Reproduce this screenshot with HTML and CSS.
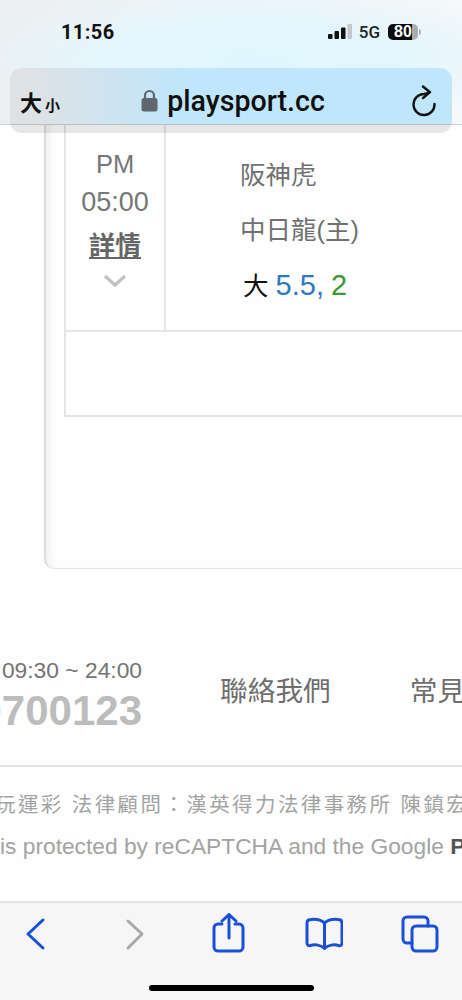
FILE: index.html
```html
<!DOCTYPE html>
<html lang="zh-Hant">
<head>
  <meta charset="UTF-8">
  <meta name="viewport" content="width=device-width, initial-scale=1.0">
  <title>playsport.cc</title>
  <link rel="stylesheet" href="styles.css">
</head>
<body>
  <div class="screen">
    <header class="top-chrome">
      <div class="status-bar">
        <span class="clock">11:56</span>
        <div class="status-icons">
          <svg class="signal" width="24" height="16" viewBox="0 0 24 16">
            <rect x="0" y="10" width="4.500" height="5" rx="1" fill="#111"/>
            <rect x="6.500" y="7" width="4.500" height="8" rx="1" fill="#111"/>
            <rect x="13" y="3.500" width="4.500" height="11.500" rx="1" fill="#111"/>
            <rect x="19.500" y="0" width="4.500" height="15" rx="1" fill="#c4c8ca"/>
          </svg>
          <span class="net">5G</span>
          <div class="battery"><span>80</span></div>
          <i class="battery-cap"></i>
        </div>
      </div>
    </header>

    <div class="url-bar">
      <div class="text-size">大<small>小</small></div>
      <div class="address">
        <svg width="17" height="23" viewBox="0 0 17 23">
          <path d="M4 10V6.500a4.500 4.500 0 0 1 9 0V10" fill="none" stroke="#5f6670" stroke-width="2.200"/>
          <rect x="0.500" y="9" width="16" height="13.500" rx="2.500" fill="#5f6670"/>
        </svg>
        <span>playsport.cc</span>
      </div>
      <svg class="reload" width="26" height="32" viewBox="0 0 26 32">
        <path d="M18 7.500Q16 8.600 13 9A10.500 10.500 0 1 0 23.500 19" fill="none" stroke="#111" stroke-width="2.400" stroke-linecap="round"/>
        <path d="M12 1.500L19 7.200L12 13" fill="none" stroke="#111" stroke-width="2.400" stroke-linecap="round" stroke-linejoin="round"/>
      </svg>
    </div>

    <main class="page">
      <section class="card">
        <div class="match-table">
          <div class="match-row">
            <div class="time-cell">
              <div>PM</div>
              <div class="kickoff">05:00</div>
              <a class="detail-link">詳情</a>
              <svg class="chevron" width="24" height="14" viewBox="0 0 24 14">
                <path d="M2 2L12 11L22 2" fill="none" stroke="#c2c2c2" stroke-width="3.200"/>
              </svg>
            </div>
            <div class="teams-cell">
              <div>阪神虎</div>
              <div>中日龍(主)</div>
              <div class="odds"><span class="odds-side">大</span> <span class="odds-line">5.5,</span> <span class="odds-val">2</span></div>
            </div>
          </div>
          <div class="empty-row"></div>
        </div>
      </section>

      <footer class="site-footer">
        <div class="footer-links">
          <div class="service">
            <div class="hours">09:30 ~ 24:00</div>
            <div class="phone">0700123</div>
          </div>
          <a class="footer-link">聯絡我們</a>
          <a class="footer-link">常見問題</a>
        </div>
        <div class="legal">
          <p class="legal-cn">玩運彩 法律顧問：漢英得力法律事務所 陳鎮宏律師</p>
          <p class="legal-en">is protected by reCAPTCHA and the Google <b>Privacy Policy</b></p>
        </div>
      </footer>
    </main>

    <nav class="toolbar">
      <div class="tool-icons">
        <svg viewBox="0 0 40 44"><path class="ic" d="M28 7L13 21L28 35"/></svg>
        <svg viewBox="0 0 40 44"><path class="ic off" d="M17 8L31 21L17 35"/></svg>
        <svg viewBox="0 0 40 44"><path class="ic" d="M15 11H11a4 4 0 0 0-4 4V34a4 4 0 0 0 4 4H32a4 4 0 0 0 4-4V15a4 4 0 0 0-4-4H28M22 25V2M15 8L22 1.500L29 8"/></svg>
        <svg viewBox="0 0 40 44"><path class="ic" d="M21.500 10C18 7 13 6 8 6.500C5.500 6.500 4 8 4 10V30C4 32 5.500 33 7.500 32.500C12 31 18 32 21.500 35.500C25 32 31 31 35.500 32.500C37.500 33 39 32 39 30V10C39 8 37.500 6.500 35 6.500C30 6 25 7 21.500 10ZM21.500 10V35.500"/></svg>
        <svg viewBox="0 0 40 44"><path class="ic" d="M13 30H8a4 4 0 0 1-4-4V8a4 4 0 0 1 4-4H25a4 4 0 0 1 4 4V13"/><rect class="ic" x="13" y="13" width="25" height="25" rx="4"/></svg>
      </div>
      <div class="home-bar"></div>
    </nav>
  </div>
</body>
</html>
```
FILE: styles.css
```css
* { margin: 0; padding: 0; box-sizing: border-box; }
html, body { width: 100%; height: 100%; background: #fefefe; overflow: hidden; font-family: "Liberation Sans", "Noto Sans CJK TC", sans-serif; }

.screen { position: relative; width: 462px; height: 1000px; display: flex; flex-direction: column; overflow: hidden; }

/* browser chrome, top */
.top-chrome { height: 125px; flex: none; border-bottom: 1px solid #c9d3d8; background: radial-gradient(ellipse 300px 70px at 55% 58px, #e0f7ff 0%, #e4f6fd 50%, rgba(240, 244, 246, 0) 100%), linear-gradient(to right, #eceff0, #f6f8f9); }
.status-bar { display: flex; justify-content: space-between; align-items: center; padding: 21px 41px 0 61px; height: 43px; }
.clock { font-size: 20px; font-weight: 700; color: #111; font-family: "Roboto", sans-serif; letter-spacing: 0.4px; }
.status-icons { display: flex; align-items: center; }
.signal { margin-right: 7px; }
.net { font-size: 17px; font-weight: 500; color: #222; margin-right: 8px; font-family: "Roboto", sans-serif; }
.battery { width: 30px; height: 16px; border-radius: 5px; background: linear-gradient(to right, #0c0c0c 80%, #a9adaf 80%); color: #fff; font-size: 16px; font-weight: 700; text-align: center; line-height: 16px; }
.battery-cap { width: 2px; height: 6px; margin-left: 1px; background: #b5b8ba; border-radius: 0 2px 2px 0; }

.url-bar { position: absolute; left: 10px; top: 68px; width: 442px; height: 65px; border-radius: 12px; background: linear-gradient(to right, #dfe2e4 4%, #cfe4f0 22%, #bfe6fb 40%, #bfe6fb) no-repeat 0 0 / 100% 56px, rgba(0, 0, 0, 0.09); display: flex; align-items: center; justify-content: space-between; padding: 0 15px 0 10px; z-index: 5; }
.text-size { font-size: 22px; font-weight: 700; color: #111; width: 60px; }
.text-size small { font-size: 15px; margin-left: 3px; }
.address { display: flex; align-items: center; gap: 9px; margin-left: 55px; }
.address span { font-family: "Roboto", sans-serif; font-weight: 500; font-size: 28.600px; color: #0e0e0e; }
.reload { margin-left: 80px; }

/* page content */
.page { flex: 1; min-height: 0; background: #fefefe; }
.card { width: 440px; height: 444px; margin-left: 44px; border-left: 2px solid #dcdcdc; border-bottom: 1px solid #e4e4e4; border-bottom-left-radius: 10px; box-shadow: inset 8px 0 8px -6px #ececec; padding-left: 18px; }
.match-table { width: 420px; border-left: 2px solid #e4e4e4; border-bottom: 2px solid #e4e4e4; }
.match-row { display: grid; grid-template-columns: 100px 1fr; height: 207px; border-bottom: 2px solid #e4e4e4; }
.empty-row { height: 83px; }

.time-cell { border-right: 2px solid #e4e4e4; display: flex; flex-direction: column; align-items: center; font-size: 25.500px; line-height: 38px; color: #777; padding-top: 20px; }
.kickoff { font-size: 27px; }
.detail-link { font-size: 26px; font-weight: 700; text-decoration: underline; color: #666; line-height: 50px; }
.chevron { margin-top: 3px; }

.teams-cell { padding: 23px 0 0 74px; font-size: 25.500px; line-height: 55px; color: #707070; }
.odds { padding-left: 3px; }
.odds-side { color: #111; }
.odds-line { color: #2f78c4; font-size: 29px; }
.odds-val { color: #3a9a2e; font-size: 29px; }

/* footer */
.site-footer { margin-top: 83px; }
.footer-links { display: flex; align-items: flex-start; height: 115px; border-bottom: 2px solid #e2e2e2; white-space: nowrap; }
.service { width: 142px; display: flex; flex-direction: column; align-items: flex-end; }
.hours { font-size: 22.800px; line-height: 36px; color: #737373; }
.phone { font-size: 42px; font-weight: 700; line-height: 46px; color: #bcbcbc; }
.footer-link { font-size: 27.700px; line-height: 42px; color: #6e6e6e; margin: 19px 0 0 78px; }
.footer-link + .footer-link { margin-left: 79px; }

.legal { white-space: nowrap; color: #a3a3a3; }
.legal-cn { font-size: 20.500px; letter-spacing: 2.400px; line-height: 40px; margin: 18px 0 0 -5px; }
.legal-en { font-size: 22.750px; line-height: 42px; }
.legal-en b { color: #555; }

/* browser chrome, bottom */
.toolbar { flex: none; height: 99px; background: #f6f6f6; border-top: 2px solid #e2e2e2; padding: 10px 0 0 15px; }
.tool-icons { display: flex; gap: 56px; }
.tool-icons svg { width: 40px; height: 44px; flex: none; }
.ic { fill: none; stroke: #1b4fd8; stroke-width: 3; stroke-linecap: round; stroke-linejoin: round; }
.ic.off { stroke: #a8a8a8; }
.home-bar { width: 165px; height: 6px; margin: 28px 0 0 134px; background: #000; border-radius: 3px; }
```
